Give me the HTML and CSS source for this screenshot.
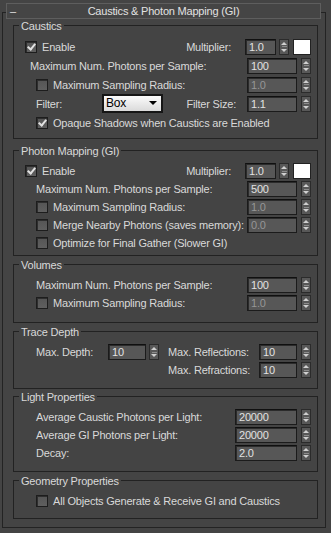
FILE: index.html
```html
<!DOCTYPE html>
<html lang="en">
<head>
  <meta charset="UTF-8">
  <title>Caustics &amp; Photon Mapping (GI)</title>
  <link rel="stylesheet" href="styles.css">
</head>
<body>
<div class="rollout-head">
  <span class="toggle">–</span>
  <span class="rollout-title">Caustics &amp; Photon Mapping (GI)</span>
</div>
<div class="rollout-body">
  <div class="group g-caustics">
    <div class="group-title">Caustics</div>
    <div class="row lead">
      <span class="cb on"></span><span class="txt">Enable</span>
      <span class="rlabel push">Multiplier:</span>
      <span class="num w31">1.0</span><span class="spin tight"></span><span class="swatch"></span>
    </div>
    <div class="row mid">
      <span class="txt">Maximum Num. Photons per Sample:</span>
      <span class="num push">100</span><span class="spin"></span>
    </div>
    <div class="row">
      <span class="cb"></span><span class="txt">Maximum Sampling Radius:</span>
      <span class="num dim push">1.0</span><span class="spin"></span>
    </div>
    <div class="row">
      <span class="txt lbl-filter">Filter:</span>
      <span class="drop">Box</span>
      <span class="rlabel narrow push">Filter Size:</span>
      <span class="num">1.1</span><span class="spin"></span>
    </div>
    <div class="row">
      <span class="cb on"></span><span class="txt">Opaque Shadows when Caustics are Enabled</span>
    </div>
  </div>

  <div class="group g-photon">
    <div class="group-title">Photon Mapping (GI)</div>
    <div class="row lead">
      <span class="cb on"></span><span class="txt">Enable</span>
      <span class="rlabel push">Multiplier:</span>
      <span class="num w31">1.0</span><span class="spin tight"></span><span class="swatch"></span>
    </div>
    <div class="row">
      <span class="txt">Maximum Num. Photons per Sample:</span>
      <span class="num push">500</span><span class="spin"></span>
    </div>
    <div class="row">
      <span class="cb"></span><span class="txt">Maximum Sampling Radius:</span>
      <span class="num dim push">1.0</span><span class="spin"></span>
    </div>
    <div class="row">
      <span class="cb"></span><span class="txt">Merge Nearby Photons (saves memory):</span>
      <span class="num dim push">0.0</span><span class="spin"></span>
    </div>
    <div class="row">
      <span class="cb"></span><span class="txt">Optimize for Final Gather (Slower GI)</span>
    </div>
  </div>

  <div class="group g-volumes">
    <div class="group-title">Volumes</div>
    <div class="row">
      <span class="txt">Maximum Num. Photons per Sample:</span>
      <span class="num push">100</span><span class="spin"></span>
    </div>
    <div class="row">
      <span class="cb"></span><span class="txt">Maximum Sampling Radius:</span>
      <span class="num dim push">1.0</span><span class="spin"></span>
    </div>
  </div>

  <div class="group g-trace">
    <div class="group-title">Trace Depth</div>
    <div class="row">
      <span class="txt lbl-depth">Max. Depth:</span>
      <span class="num w38">10</span><span class="spin tight"></span>
      <span class="txt lbl-refl push">Max. Reflections:</span>
      <span class="num w38">10</span><span class="spin"></span>
    </div>
    <div class="row">
      <span class="txt lbl-refl push">Max. Refractions:</span>
      <span class="num w38">10</span><span class="spin"></span>
    </div>
  </div>

  <div class="group g-light">
    <div class="group-title">Light Properties</div>
    <div class="row">
      <span class="txt">Average Caustic Photons per Light:</span>
      <span class="num w62 push">20000</span><span class="spin"></span>
    </div>
    <div class="row">
      <span class="txt">Average GI Photons per Light:</span>
      <span class="num w62 push">20000</span><span class="spin"></span>
    </div>
    <div class="row">
      <span class="txt">Decay:</span>
      <span class="num w62 push">2.0</span><span class="spin"></span>
    </div>
  </div>

  <div class="group g-geometry">
    <div class="group-title">Geometry Properties</div>
    <div class="row">
      <span class="cb"></span><span class="txt">All Objects Generate &amp; Receive GI and Caustics</span>
    </div>
  </div>
</div>
</body>
</html>
```

FILE: styles.css
```css
body {
  margin: 0;
  padding-top: 3px;
  background: #444;
  font-family: 'Liberation Sans', Arial, sans-serif;
  font-size: 11px;
  letter-spacing: -0.2px;
  color: #d9d9d9;
}
.rollout-head {
  position: relative;
  z-index: 1;
  display: grid;
  grid-template-columns: 14px 1fr 14px;
  align-items: center;
  box-sizing: border-box;
  height: 16px;
  margin: 0 10px 0 6px;
  border: 1px solid #5e5e5e;
  background: #454545;
  color: #e2e2e2;
  line-height: 14px;
}
.toggle {
  padding-left: 3px;
}
.rollout-title {
  text-align: center;
}
.rollout-body {
  margin: -7px 5px 0 2px;
  border: 1px solid #232323;
  padding-bottom: 8px;
}
.group {
  margin: 8px 7px 0 10px;
  border: 1px solid #222;
  padding: 0 6px 9px 0;
}
.g-caustics {
  margin-top: 12px;
  padding-bottom: 6px;
}
.g-photon {
  margin-top: 11px;
  padding-bottom: 3px;
}
.g-volumes {
  padding-bottom: 10px;
}
.g-light {
  margin-top: 7px;
}
.g-geometry {
  padding-bottom: 8px;
}
.group-title {
  width: fit-content;
  height: 14px;
  margin: -7px 0 4px 5px;
  padding: 0 2px;
  background: #444;
  line-height: 14px;
}
.row {
  display: flex;
  align-items: center;
  height: 18px;
  padding-left: 22px;
}
.g-caustics .row {
  height: 19px;
}
.row.lead {
  padding-left: 11px;
}
.row.mid {
  padding-left: 16px;
}
.txt {
  white-space: nowrap;
  line-height: 14px;
}
.push {
  margin-left: auto;
}
.rlabel {
  margin-right: 14px;
  white-space: nowrap;
}
.rlabel.narrow {
  margin-right: 11px;
}
.lbl-filter {
  width: 66px;
}
.lbl-depth {
  width: 72px;
}
.lbl-refl {
  width: 91px;
}
.cb {
  position: relative;
  flex-shrink: 0;
  box-sizing: border-box;
  width: 12px;
  height: 12px;
  margin-right: 5px;
  border: 1px solid #1d1d1d;
  background: linear-gradient(#555, #5f5f5f);
  box-shadow: inset 1px 1px 0 #2e2e2e;
}
.cb.on::after {
  content: '';
  position: absolute;
  left: 3px;
  top: 0;
  width: 3px;
  height: 6px;
  border: solid #e2e2e2;
  border-width: 0 2px 2px 0;
  transform: rotate(40deg);
}
.num {
  flex-shrink: 0;
  box-sizing: border-box;
  width: 50px;
  height: 16px;
  padding-left: 3px;
  border: 1px solid #1b1b1b;
  border-top-color: #101010;
  background: #575757;
  box-shadow: inset 1px 1px 0 #2b2b2b;
  color: #e2e2e2;
  line-height: 14px;
}
.num.dim {
  color: #969696;
}
.w31 {
  width: 31px;
}
.w38 {
  width: 38px;
}
.w62 {
  width: 62px;
}
.spin {
  display: flex;
  flex-direction: column;
  align-items: center;
  justify-content: center;
  gap: 4px;
  flex-shrink: 0;
  box-sizing: border-box;
  width: 10px;
  height: 16px;
  margin-left: 4px;
  border: 1px solid #2b2b2b;
  background: #585858 linear-gradient(#8c8c8c, #8c8c8c) center / 5px 1px no-repeat;
}
.spin.tight {
  margin-left: 3px;
}
.spin::before,
.spin::after {
  content: '';
  border-left: 3px solid transparent;
  border-right: 3px solid transparent;
}
.spin::before {
  border-bottom: 3px solid #d0d0d0;
}
.spin::after {
  border-top: 3px solid #d0d0d0;
}
.swatch {
  flex-shrink: 0;
  box-sizing: border-box;
  width: 18px;
  height: 16px;
  margin-left: 4px;
  border: 1px solid #222;
  background: #fff;
}
.drop {
  position: relative;
  box-sizing: border-box;
  width: 61px;
  height: 19px;
  padding-left: 2px;
  border: 2px solid #161616;
  background: linear-gradient(#fbfbfb, #dadada);
  color: #000;
  line-height: 15px;
  font-size: 12px;
}
.drop::after {
  content: '';
  position: absolute;
  right: 4px;
  top: 5px;
  border-left: 4px solid transparent;
  border-right: 4px solid transparent;
  border-top: 4px solid #000;
}
```
